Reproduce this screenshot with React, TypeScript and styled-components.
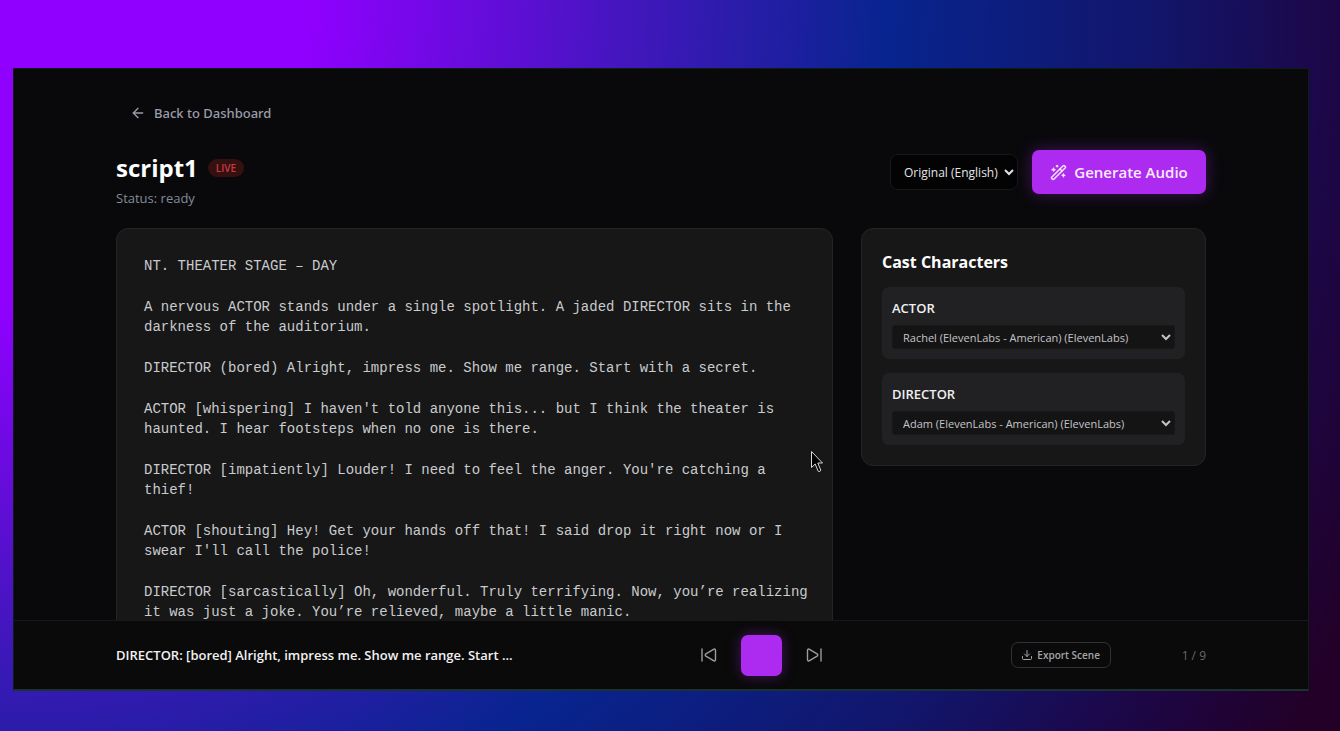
import React from 'react';
import styled, { createGlobalStyle } from 'styled-components';
import { ArrowLeft, WandSparkles, Download } from 'lucide-react';

const sans = "'Open Sans', 'Noto Sans', sans-serif";

const GlobalStyle = createGlobalStyle`
  * { box-sizing: border-box; }
  html, body, #root { height: 100%; }
  body { margin: 0; font-family: ${sans}; }
  button, select { font-family: inherit; }
`;

const Backdrop = styled.div`
  height: 100%;
  display: flex;
  padding: 68px 31px 40px 13px;
  background: radial-gradient(circle farthest-corner at 0 0, #9000ff 0%, #9000ff 20%, #3c18b8 43%, #08248f 58%, #12156a 76%, #1c0748 87%, #220028 97%);
`;

const Window = styled.div`
  flex: 1;
  min-width: 0;
  display: flex;
  flex-direction: column;
  background: #09090b;
  border: 1px solid #0c200f;
  border-bottom: 2px solid #1b3230;
  overflow: hidden;
`;

const Page = styled.main`
  flex: 1;
  min-height: 0;
  overflow: hidden;
  padding: 32px 102px 0;
`;

const BackLink = styled.a`
  display: inline-flex;
  align-items: center;
  gap: 8px;
  margin-left: 14px;
  font-family: 'Noto Sans', sans-serif;
  font-size: 13px;
  line-height: 24px;
  font-weight: 500;
  color: #9a9daa;
  text-decoration: none;
`;

const Header = styled.header`
  display: flex;
  justify-content: space-between;
  align-items: flex-start;
  margin-top: 24px;
`;

const TitleRow = styled.div`
  display: flex;
  align-items: center;
  gap: 10px;
`;

const Title = styled.h1`
  margin: 0;
  font-size: 24px;
  line-height: 35px;
  font-weight: 700;
  color: #fff;
`;

const LiveBadge = styled.span`
  padding: 0 8px;
  border-radius: 9px;
  font-size: 10px;
  line-height: 18px;
  font-weight: 600;
  color: #c93a42;
  background: #34110f;
`;

const Status = styled.p`
  margin: 3px 0 0;
  font-size: 13px;
  line-height: 20px;
  color: #848b9a;
`;

const Actions = styled.div`
  display: flex;
  align-items: center;
  gap: 14px;
`;

const LanguageSelect = styled.select`
  width: 128px;
  height: 36px;
  padding: 0 0 0 9px;
  border: 1px solid #17171a;
  border-radius: 8px;
  background: #030304;
  color: #e4e4e7;
  font-size: 12px;
`;

const GenerateButton = styled.button`
  display: flex;
  align-items: center;
  justify-content: center;
  gap: 7px;
  width: 174px;
  height: 44px;
  padding: 0;
  border: 0;
  border-radius: 7px;
  background: #ad2bf0;
  box-shadow: 0 0 16px rgba(173, 43, 240, 0.35);
  color: #fbeaff;
  font-size: 15px;
  font-weight: 600;
`;

const Columns = styled.div`
  display: grid;
  grid-template-columns: minmax(0, 717fr) minmax(0, 345fr);
  gap: 28px;
  align-items: start;
  margin-top: 20px;
`;

const Panel = styled.section`
  border: 1px solid #242426;
  border-radius: 12px;
  background: #171717;
`;

const ScriptPanel = styled(Panel)`
  padding: 27px 20px 27px 27px;
`;

const ScriptText = styled.div`
  font-family: 'Liberation Mono', monospace;
  font-size: 14px;
  color: #c9cbce;
`;

const ScriptParagraph = styled.p`
  margin: 0 0 21px;
  line-height: 20px;
`;

const CastPanel = styled(Panel)`
  padding: 20px;
`;

const CastTitle = styled.h2`
  margin: 0 0 12px;
  font-size: 16px;
  line-height: 26px;
  font-weight: 700;
  color: #fff;
`;

const CastList = styled.div`
  display: flex;
  flex-direction: column;
  gap: 14px;
`;

const CastCard = styled.div`
  display: flex;
  flex-direction: column;
  gap: 6px;
  padding: 10px;
  border-radius: 7px;
  background: #212123;
`;

const CastName = styled.label`
  font-size: 13px;
  line-height: 22px;
  font-weight: 600;
  color: #efeff1;
`;

const VoiceSelect = styled.select`
  width: 100%;
  height: 24px;
  padding: 0 0 0 6px;
  border: 1px solid #171718;
  border-radius: 3px;
  background: #141415;
  color: #c4c4c8;
  font-size: 11px;
`;

const Player = styled.footer`
  display: flex;
  justify-content: space-between;
  align-items: center;
  height: 69px;
  padding: 0 102px;
  border-top: 1px solid #18181a;
  background: #0a0a0a;
`;

const NowPlaying = styled.div`
  font-size: 13px;
  font-weight: 600;
  color: #f1f1f1;
  white-space: nowrap;
`;

const Transport = styled.div`
  display: flex;
  align-items: center;
  gap: 24px;
`;

const SkipButton = styled.button`
  display: flex;
  padding: 0;
  border: 0;
  background: none;
  color: #9c9ca1;
`;

const StopButton = styled.button`
  width: 41px;
  height: 41px;
  padding: 0;
  border: 0;
  border-radius: 7px;
  background: #ad2bf0;
  box-shadow: 0 0 14px rgba(173, 43, 240, 0.35);
`;

const PlayerEnd = styled.div`
  display: flex;
  align-items: center;
  justify-content: flex-end;
  gap: 71px;
`;

const ExportButton = styled.button`
  display: flex;
  align-items: center;
  justify-content: center;
  gap: 4px;
  width: 100px;
  height: 26px;
  padding: 0;
  border: 1px solid #323236;
  border-radius: 7px;
  background: transparent;
  color: #a5a5aa;
  font-size: 10px;
  font-weight: 600;
`;

const Counter = styled.span`
  font-size: 12px;
  color: #68686e;
`;

const Pointer = styled.svg`
  position: absolute;
  left: 810px;
  top: 450px;
  pointer-events: none;
`;

const script = [
  'NT. THEATER STAGE – DAY',
  'A nervous ACTOR stands under a single spotlight. A jaded DIRECTOR sits in the darkness of the auditorium.',
  'DIRECTOR (bored) Alright, impress me. Show me range. Start with a secret.',
  "ACTOR [whispering] I haven't told anyone this... but I think the theater is haunted. I hear footsteps when no one is there.",
  "DIRECTOR [impatiently] Louder! I need to feel the anger. You're catching a thief!",
  "ACTOR [shouting] Hey! Get your hands off that! I said drop it right now or I swear I'll call the police!",
  'DIRECTOR [sarcastically] Oh, wonderful. Truly terrifying. Now, you’re realizing it was just a joke. You’re relieved, maybe a little manic.',
];

const cast = [
  { name: 'ACTOR', voice: 'Rachel (ElevenLabs - American) (ElevenLabs)' },
  { name: 'DIRECTOR', voice: 'Adam (ElevenLabs - American) (ElevenLabs)' },
];

function SkipIcon({ forward = false }: { forward?: boolean }) {
  return (
    <svg width="16" height="16" viewBox="0 0 16 16" fill="none" stroke="currentColor" strokeWidth="1.4" strokeLinecap="round" strokeLinejoin="round">
      {forward ? (
        <path d="M15 2v12M1.500 3.500v9c0 1.300 1 1.800 2 1.200l7.600-4.600c.9-.6.9-1.600 0-2.200L3.500 2.300c-1-.6-2-.1-2 1.200Z" />
      ) : (
        <path d="M1 2v12M14.500 3.500v9c0 1.300-1 1.800-2 1.200L4.900 9.100c-.9-.6-.9-1.600 0-2.200l7.600-4.600c1-.6 2-.1 2 1.200Z" />
      )}
    </svg>
  );
}

export default function App() {
  return (
    <Backdrop>
      <GlobalStyle />
      <Window>
        <Page>
          <BackLink href="#dashboard">
            <ArrowLeft size={16} strokeWidth={2} />
            Back to Dashboard
          </BackLink>
          <Header>
            <div>
              <TitleRow>
                <Title>script1</Title>
                <LiveBadge>LIVE</LiveBadge>
              </TitleRow>
              <Status>Status: ready</Status>
            </div>
            <Actions>
              <LanguageSelect aria-label="Language">
                <option>Original (English)</option>
              </LanguageSelect>
              <GenerateButton type="button">
                <WandSparkles size={17} />
                Generate Audio
              </GenerateButton>
            </Actions>
          </Header>
          <Columns>
            <ScriptPanel>
              <ScriptText>
                {script.map((text) => (
                  <ScriptParagraph key={text}>{text}</ScriptParagraph>
                ))}
              </ScriptText>
            </ScriptPanel>
            <CastPanel>
              <CastTitle>Cast Characters</CastTitle>
              <CastList>
                {cast.map(({ name, voice }) => (
                  <CastCard key={name}>
                    <CastName htmlFor={name}>{name}</CastName>
                    <VoiceSelect id={name}>
                      <option>{voice}</option>
                    </VoiceSelect>
                  </CastCard>
                ))}
              </CastList>
            </CastPanel>
          </Columns>
        </Page>
        <Player>
          <NowPlaying>DIRECTOR: [bored] Alright, impress me. Show me range. Start ...</NowPlaying>
          <Transport>
            <SkipButton type="button" aria-label="Previous line"><SkipIcon /></SkipButton>
            <StopButton type="button" aria-label="Stop" />
            <SkipButton type="button" aria-label="Next line"><SkipIcon forward /></SkipButton>
          </Transport>
          <PlayerEnd>
            <ExportButton type="button">
              <Download size={12} strokeWidth={2} />
              Export Scene
            </ExportButton>
            <Counter>1 / 9</Counter>
          </PlayerEnd>
        </Player>
      </Window>
      <Pointer width="14" height="24" viewBox="0 0 14 24" fill="#000" stroke="#d8d8d8" strokeWidth="1">
        <path d="M1.500 1.500v16l3.700-3.500 3 7.200c1 .8 2.600.2 2.500-1.200L7.800 13h4.700Z" />
      </Pointer>
    </Backdrop>
  );
}
